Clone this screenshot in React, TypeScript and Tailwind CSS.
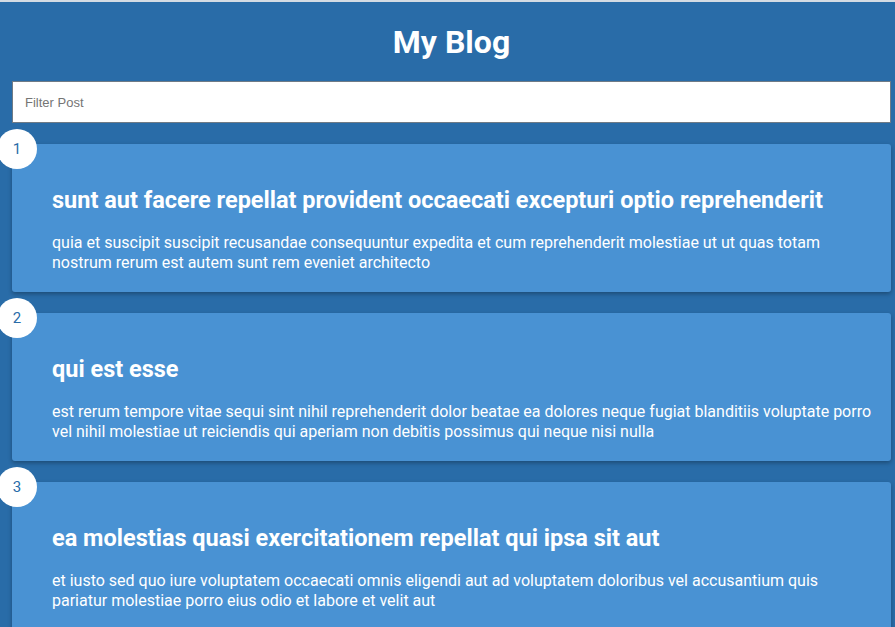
const posts = [
  {
    id: 1,
    title: "sunt aut facere repellat provident occaecati excepturi optio reprehenderit",
    body: "quia et suscipit suscipit recusandae consequuntur expedita et cum reprehenderit molestiae ut ut quas totam nostrum rerum est autem sunt rem eveniet architecto",
  },
  {
    id: 2,
    title: "qui est esse",
    body: "est rerum tempore vitae sequi sint nihil reprehenderit dolor beatae ea dolores neque fugiat blanditiis voluptate porro vel nihil molestiae ut reiciendis qui aperiam non debitis possimus qui neque nisi nulla",
  },
  {
    id: 3,
    title: "ea molestias quasi exercitationem repellat qui ipsa sit aut",
    body: "et iusto sed quo iure voluptatem occaecati omnis eligendi aut ad voluptatem doloribus vel accusantium quis pariatur molestiae porro eius odio et labore et velit aut",
  },
  {
    id: 4,
    title: "eum et est occaecati",
    body: "ullam et saepe reiciendis voluptatem adipisci sit amet autem assumenda provident rerum culpa quis hic commodi nesciunt rem tenetur doloremque ipsam iure quis sunt voluptatem rerum illo velit",
  },
];

function Post({ post }: { post: (typeof posts)[number] }) {
  return (
    <div className="relative shrink-0 rounded-[3px] bg-[#4992d3] pt-[42px] pb-[19px] pl-10 pr-4 shadow-[0_2px_4px_rgba(0,0,0,0.3)]">
      <div className="absolute -top-[15px] -left-[15px] flex h-10 w-10 items-center justify-center rounded-full bg-white text-[15px] text-[#296ca8]">
        {post.id}
      </div>
      <h2 className="text-[23.5px] leading-7 font-bold text-white">{post.title}</h2>
      <p className="mt-[19px] text-base leading-5 text-white">{post.body}</p>
    </div>
  );
}

export default function App() {
  return (
    <div className="h-[627px] overflow-hidden border-t-2 border-[#d3dbe3] bg-[#296ca8] font-['Roboto',sans-serif]">
      <div className="flex flex-col pl-3 pr-1">
        <h1 className="pt-[22px] text-center text-[32px] leading-[37px] font-bold text-white">My Blog</h1>
        <input
          type="text"
          placeholder="Filter Post"
          className="mt-[20px] h-[42px] w-full border border-[#6f7b86] bg-white px-3 font-['Liberation_Sans',Arial,sans-serif] text-[13px] text-gray-800 placeholder:text-[#757575] outline-none"
        />
        <div className="mt-[21px] flex flex-col gap-[21px]">
          {posts.map((p) => (
            <Post key={p.id} post={p} />
          ))}
        </div>
      </div>
    </div>
  );
}
